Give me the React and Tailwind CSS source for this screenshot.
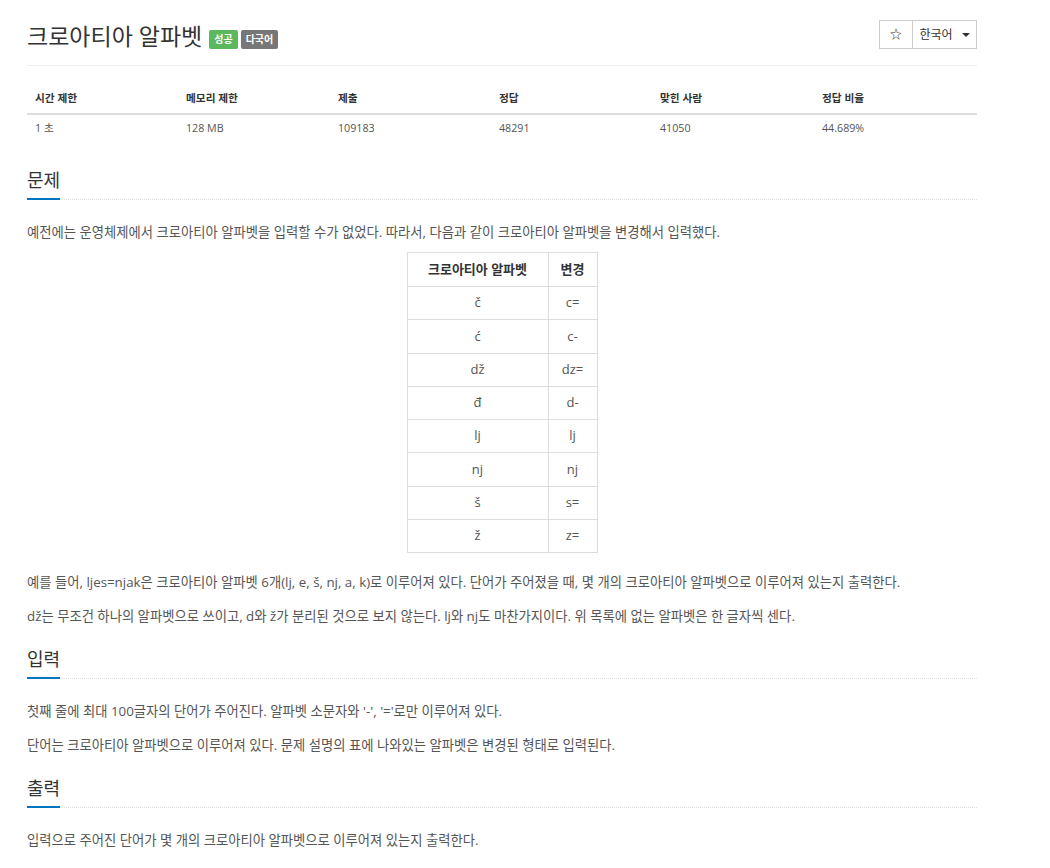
import { useState } from 'react';

const stats = [
  { label: '시간 제한', value: '1 초', w: 'w-[151px]' },
  { label: '메모리 제한', value: '128 MB', w: 'w-[152px]' },
  { label: '제출', value: '109183', w: 'w-[161px]' },
  { label: '정답', value: '48291', w: 'w-[161px]' },
  { label: '맞힌 사람', value: '41050', w: 'w-[162px]' },
  { label: '정답 비율', value: '44.689%', w: 'flex-1' },
];

const alphabet = [
  ['č', 'c='],
  ['ć', 'c-'],
  ['dž', 'dz='],
  ['đ', 'd-'],
  ['lj', 'lj'],
  ['nj', 'nj'],
  ['š', 's='],
  ['ž', 'z='],
];

function SectionHeader({ title, first }) {
  return (
    <div className={`${first ? 'mt-[24px]' : 'mt-[18px]'} mb-[22px] border-b border-dotted border-[#ddd]`}>
      <h2 className="text-[18px] leading-[30px] text-[#333] pb-[3px] inline-block border-b-2 border-[#0076c0] mb-[-1px]">
        {title}
      </h2>
    </div>
  );
}

export default function App() {
  const [starred, setStarred] = useState(false);

  return (
    <div className="bg-white min-h-[868px] font-['Open_Sans','Noto_Sans_CJK_KR',sans-serif] text-[13.33px] text-[#555]">
      <div className="w-[950px] ml-[27px] pt-[20px]">
        <div className="flex items-start justify-between pb-[13px] border-b border-[#eee]">
          <div className="flex items-start">
            <h1 className="text-[23px] leading-[32px] text-[#333] mr-[7px]">크로아티아 알파벳</h1>
            <span className="mt-[10px] bg-[#5cb85c] text-white text-[10px] font-bold px-[5px] leading-[19px] rounded-[2px]">성공</span>
            <span className="mt-[10px] ml-[3px] bg-[#777] text-white text-[10px] font-bold px-[5px] leading-[19px] rounded-[2px]">다국어</span>
          </div>
          <div className="flex border border-[#ccc] h-[29px] text-[12px] text-[#333]">
            <button
              onClick={() => setStarred(!starred)}
              className="w-[33px] flex items-center justify-center border-r border-[#ccc]"
            >
              {starred ? '★' : '☆'}
            </button>
            <button className="w-[63px] flex items-center justify-center gap-[9px]">
              한국어
              <span className="w-0 h-0 border-l-[4px] border-r-[4px] border-t-[4px] border-l-transparent border-r-transparent border-t-[#333]" />
            </button>
          </div>
        </div>

        <div className="mt-[17px] text-[10.7px]">
          <div className="flex border-b-2 border-[#ddd] h-[32px] items-center font-bold text-[#333]">
            {stats.map((s) => (
              <div key={s.label} className={`${s.w} pl-[8px]`}>{s.label}</div>
            ))}
          </div>
          <div className="flex h-[26px] items-center text-[#555]">
            {stats.map((s) => (
              <div key={s.label} className={`${s.w} pl-[8px]`}>{s.value}</div>
            ))}
          </div>
        </div>

        <SectionHeader title="문제" first />
        <p className="leading-[20px] mb-[10px]">
          예전에는 운영체제에서 크로아티아 알파벳을 입력할 수가 없었다. 따라서, 다음과 같이 크로아티아 알파벳을 변경해서 입력했다.
        </p>
        <div className="flex justify-center mb-[19px]">
          <table className="border-collapse border border-[#ddd] text-center text-[13px]">
            <thead>
              <tr className="h-[34px]">
                <th className="border border-[#ddd] w-[141px] font-bold text-[#333]">크로아티아 알파벳</th>
                <th className="border border-[#ddd] w-[49px] font-bold text-[#333]">변경</th>
              </tr>
            </thead>
            <tbody>
              {alphabet.map(([a, b]) => (
                <tr key={a} className="h-[33.25px]">
                  <td className="border border-[#ddd]">{a}</td>
                  <td className="border border-[#ddd]">{b}</td>
                </tr>
              ))}
            </tbody>
          </table>
        </div>
        <p className="leading-[20px] mb-[14px]">
          예를 들어, ljes=njak은 크로아티아 알파벳 6개(lj, e, š, nj, a, k)로 이루어져 있다. 단어가 주어졌을 때, 몇 개의 크로아티아 알파벳으로 이루어져 있는지 출력한다.
        </p>
        <p className="leading-[20px]">
          dž는 무조건 하나의 알파벳으로 쓰이고, d와 ž가 분리된 것으로 보지 않는다. lj와 nj도 마찬가지이다. 위 목록에 없는 알파벳은 한 글자씩 센다.
        </p>

        <SectionHeader title="입력" />
        <p className="leading-[20px] mb-[14px]">
          첫째 줄에 최대 100글자의 단어가 주어진다. 알파벳 소문자와 '-', '='로만 이루어져 있다.
        </p>
        <p className="leading-[20px]">
          단어는 크로아티아 알파벳으로 이루어져 있다. 문제 설명의 표에 나와있는 알파벳은 변경된 형태로 입력된다.
        </p>

        <SectionHeader title="출력" />
        <p className="leading-[20px]">
          입력으로 주어진 단어가 몇 개의 크로아티아 알파벳으로 이루어져 있는지 출력한다.
        </p>
      </div>
    </div>
  );
}
